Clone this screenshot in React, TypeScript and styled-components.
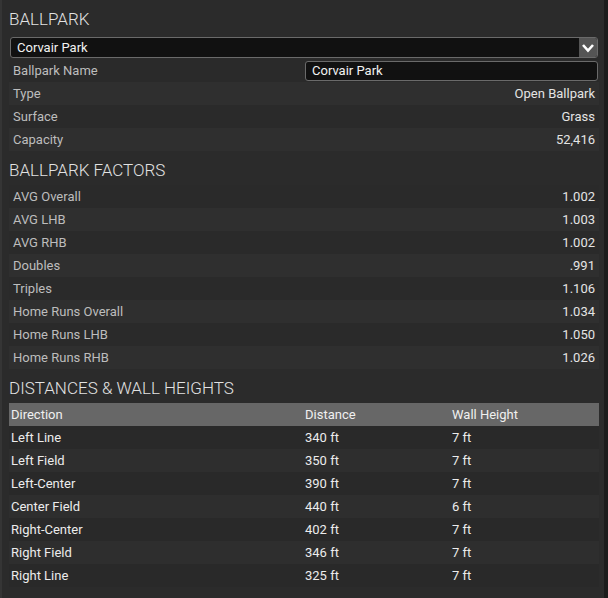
import React from 'react';
import styled, { createGlobalStyle } from 'styled-components';

const GlobalStyle = createGlobalStyle`
  html, body {
    margin: 0;
    padding: 0;
    background: #2b2b2b;
  }
  body {
    font-family: Roboto, "Liberation Sans", sans-serif;
  }
`;

const info = [
  { label: 'Type', value: 'Open Ballpark' },
  { label: 'Surface', value: 'Grass' },
  { label: 'Capacity', value: '52,416' },
];

const factors = [
  { label: 'AVG Overall', value: '1.002' },
  { label: 'AVG LHB', value: '1.003' },
  { label: 'AVG RHB', value: '1.002' },
  { label: 'Doubles', value: '.991' },
  { label: 'Triples', value: '1.106' },
  { label: 'Home Runs Overall', value: '1.034' },
  { label: 'Home Runs LHB', value: '1.050' },
  { label: 'Home Runs RHB', value: '1.026' },
];

const distances = [
  ['Left Line', '340 ft', '7 ft'],
  ['Left Field', '350 ft', '7 ft'],
  ['Left-Center', '390 ft', '7 ft'],
  ['Center Field', '440 ft', '6 ft'],
  ['Right-Center', '402 ft', '7 ft'],
  ['Right Field', '346 ft', '7 ft'],
  ['Right Line', '325 ft', '7 ft'],
];

const App: React.FC = () => {
  return (
    <>
      <GlobalStyle />
      <Page>
        <Panel>
          <SectionTitle $first>BALLPARK</SectionTitle>
          <Select>
            <SelectText>Corvair Park</SelectText>
            <SelectButton>
              <svg width="12" height="10" viewBox="0 0 12 10">
                <path d="M1 2 L6 7.5 L11 2" fill="none" stroke="#fff" strokeWidth="2.6" />
              </svg>
            </SelectButton>
          </Select>
          <InfoRow $odd={false}>
            <Label>Ballpark Name</Label>
            <NameInput>Corvair Park</NameInput>
          </InfoRow>
          {info.map((r, i) => (
            <InfoRow key={r.label} $odd={i % 2 === 0}>
              <Label>{r.label}</Label>
              <Value>{r.value}</Value>
            </InfoRow>
          ))}

          <SectionTitle>BALLPARK FACTORS</SectionTitle>
          {factors.map((r, i) => (
            <InfoRow key={r.label} $odd={i % 2 === 1}>
              <Label>{r.label}</Label>
              <Value>{r.value}</Value>
            </InfoRow>
          ))}

          <SectionTitle>DISTANCES &amp; WALL HEIGHTS</SectionTitle>
          <Table>
            <HeadRow>
              <Cell>Direction</Cell>
              <Cell>Distance</Cell>
              <Cell>Wall Height</Cell>
            </HeadRow>
            {distances.map((d, i) => (
              <TableRow key={d[0]} $odd={i % 2 === 1}>
                <Cell>{d[0]}</Cell>
                <Cell>{d[1]}</Cell>
                <Cell>{d[2]}</Cell>
              </TableRow>
            ))}
          </Table>
        </Panel>
        <ScrollTrack />
      </Page>
    </>
  );
};

const Page = styled.div`
  display: flex;
  width: 608px;
  height: 598px;
  background: #2b2b2b;
  border-left: 2px solid #353535;
  box-sizing: border-box;
  overflow: hidden;
`;

const Panel = styled.div`
  flex: 1;
  padding: 0 5px 0 7px;
  display: flex;
  flex-direction: column;
`;

const ScrollTrack = styled.div`
  width: 4px;
  background: #1c1c1c;
`;

const SectionTitle = styled.div<{ $first?: boolean }>`
  box-sizing: border-box;
  height: ${(p) => (p.$first ? '37px' : '34px')};
  padding-top: ${(p) => (p.$first ? '2px' : '4px')};
  line-height: ${(p) => (p.$first ? '34px' : '30px')};
  font-size: 17px;
  font-weight: 300;
  color: #e2e2e2;
`;

const Select = styled.div`
  display: flex;
  height: 21px;
  margin: 0 1px 1px 1px;
  background: #111;
  border: 1px solid #6a6a6a;
  border-radius: 3px;
  box-sizing: border-box;
  overflow: hidden;
`;

const SelectText = styled.div`
  flex: 1;
  padding-left: 6px;
  font-size: 13px;
  line-height: 19px;
  color: #f2f2f2;
`;

const SelectButton = styled.div`
  width: 18px;
  background: #555;
  display: flex;
  align-items: center;
  justify-content: center;
`;

const InfoRow = styled.div<{ $odd: boolean }>`
  display: flex;
  align-items: center;
  justify-content: space-between;
  height: 23px;
  padding: 0 4px;
  background: ${(p) => (p.$odd ? '#2f2f2f' : '#2a2a2a')};
`;

const Label = styled.span`
  font-size: 13px;
  color: #bdbdbd;
`;

const Value = styled.span`
  font-size: 13px;
  color: #e4e4e4;
`;

const NameInput = styled.div`
  width: 293px;
  height: 20px;
  margin-right: -3px;
  box-sizing: border-box;
  background: #111;
  border: 1px solid #6a6a6a;
  border-radius: 3px;
  padding-left: 6px;
  font-size: 13px;
  line-height: 18px;
  color: #f2f2f2;
`;

const Table = styled.div`
  display: flex;
  flex-direction: column;
`;

const HeadRow = styled.div`
  display: grid;
  grid-template-columns: 294px 147px 1fr;
  height: 23px;
  align-items: center;
  padding-left: 2px;
  background: #676767;
  color: #f0f0f0;
  font-size: 13px;
`;

const TableRow = styled.div<{ $odd: boolean }>`
  display: grid;
  grid-template-columns: 294px 147px 1fr;
  height: 23px;
  align-items: center;
  padding-left: 2px;
  background: ${(p) => (p.$odd ? '#2e2e2e' : '#292929')};
  color: #ececec;
  font-size: 13px;
`;

const Cell = styled.span``;

export default App;
